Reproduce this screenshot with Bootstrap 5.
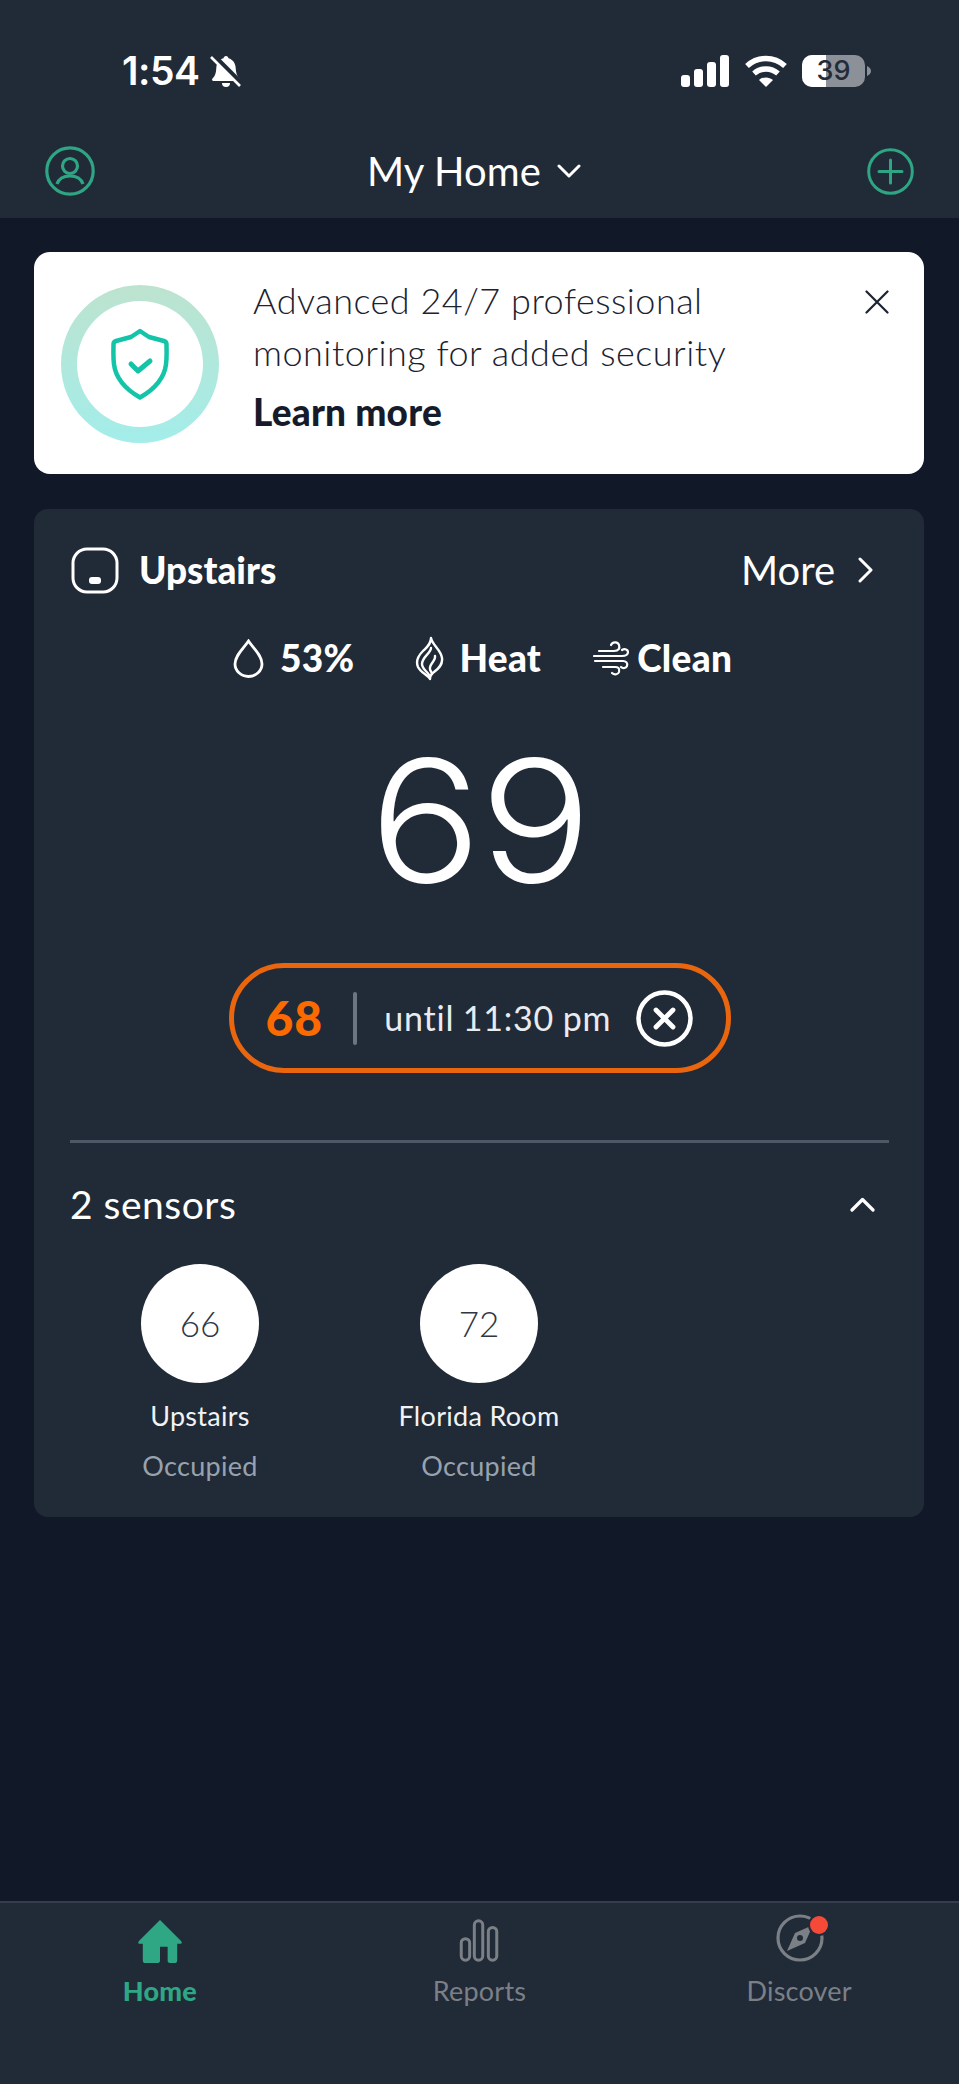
<!DOCTYPE html>
<html lang="en">
<head>
<meta charset="utf-8">
<title>My Home</title>
<link href="https://cdn.jsdelivr.net/npm/bootstrap@5.3.0/dist/css/bootstrap.min.css" rel="stylesheet">
<style>
html,body{height:2084px;}
body{margin:0;background:#111928;color:#fff;font-family:"Lato",sans-serif;overflow:hidden;}
.shell{height:2084px;}
.app-head{height:218px;background:#212a37;}
.status-row{height:44px;padding:0 88px 0 122px;}
.head-spacer{height:49px;}
.clock{font-family:"Inter",sans-serif;font-weight:600;font-size:39px;line-height:44px;letter-spacing:-.5px;}
.bell{margin-left:2px;}
.gap-sm{margin-left:14px;}
.nav-row{height:50px;margin-top:53px;padding:0 45px;}
.home-group{margin-right:14px;}
.home-title{font-size:40px;line-height:50px;font-weight:400;letter-spacing:.1px;}
.content{padding:34px 35px 0 34px;}
.promo{height:222px;border:0;border-radius:16px;background:#fff;color:#1b2230;padding:22px 35px 0 27px;}
.ring{width:158px;height:158px;margin-top:11px;border-radius:50%;background:linear-gradient(180deg,#bde3cf,#a3edea);flex:none;}
.ring-hole{width:126px;height:126px;border-radius:50%;background:#fff;}
.promo-text{margin-left:34px;font-size:36px;line-height:52px;font-weight:300;letter-spacing:.5px;}
.promo-link{font-size:37px;font-weight:900;line-height:52px;margin-top:8px;letter-spacing:.2px;color:#151b2a;}
.promo-close{margin-top:16px;}
.unit{margin-top:35px;height:1008px;border:0;border-radius:14px;background:#212a37;color:#fff;padding:38px 35px 0 36px;}
.unit-head{height:46px;}
.thermo{margin-left:1px;}
.unit-name{font-size:37px;font-weight:900;line-height:46px;margin-left:20px;}
.unit-more{font-size:40px;font-weight:400;line-height:46px;margin-right:23px;}
.more-chev{margin-right:16px;}
.modes{height:46px;margin-top:42px;padding-left:163px;}
.mode{font-size:37px;font-weight:900;line-height:46px;letter-spacing:.3px;}
.mode-a{margin-left:16px;}
.mode-b{margin-left:60px;}
.mode-c{margin-left:52px;}
.mode-t2{margin-left:15px;}
.mode-t3{margin-left:8px;}
.temp{font-family:"Inter",sans-serif;font-weight:300;font-size:170px;line-height:133px;height:133px;margin-top:73px;letter-spacing:-2px;text-align:center;transform:scaleX(1.1);}
.hold{width:502px;height:110px;margin:76px auto 0;border:5px solid #e9660f;border-radius:55px;padding-left:32px;}
.hold-set{color:#fb6a00;font-size:48px;font-weight:900;line-height:1;letter-spacing:1px;}
.hold-bar{width:4px;height:53px;background:#6c7683;border-radius:2px;margin:0 27px 0 30px;}
.hold-until{font-size:34px;font-weight:400;line-height:1;letter-spacing:.8px;word-spacing:-1px;color:#e9ecef;width:252px;}
.rule{height:3px;background:#4d5866;margin-top:67px;}
.sensors-head{height:46px;margin-top:38px;padding-right:14px;}
.sensors-title{font-size:39px;line-height:46px;font-weight:400;letter-spacing:.5px;}
.sensor-list{margin:37px 0 0 30px;gap:79px;}
.sensor{width:200px;text-align:center;}
.dial{width:118px;height:119px;border-radius:50%;background:#fff;color:#2f3743;font-size:35px;font-weight:300;margin:0 auto 13px;}
.sensor-name{font-size:27px;line-height:40px;font-weight:400;color:#f1f3f5;letter-spacing:.3px;}
.sensor-state{font-size:27px;line-height:40px;margin-top:10px;font-weight:400;color:#98a2ae;letter-spacing:.3px;}
.tabs{height:183px;background:#212a37;border-top:2px solid #343e4d;flex:none;}
.tab{padding-top:16px;text-align:center;}
.tab-icon{height:48px;}
.compass{margin:-6px 0 0 14px;}
.tab-label{font-size:27px;line-height:34px;margin-top:7px;color:#7b8087;font-weight:400;letter-spacing:.2px;}
.tab-on{color:#2fa684;font-weight:900;}
</style>
</head>
<body>
<div class="shell d-flex flex-column">
  <header class="app-head">
    <div class="head-spacer"></div>
    <div class="status-row d-flex justify-content-between align-items-center">
      <div class="d-flex align-items-center gap-2">
        <span class="clock">1:54</span>
        <svg class="bell" width="34" height="34" viewBox="0 0 34 34" aria-hidden="true">
          <path d="M17 2c-1.400 0-2.400 1-2.500 2.300C10 5.600 7.500 9.300 7.300 14c-.2 4.700-1 7.800-3.800 10.500-.9 1-.3 2.500 1 2.500h25c1.300 0 1.900-1.500 1-2.500-2.800-2.700-3.600-5.800-3.800-10.500-.2-4.700-2.700-8.400-7.200-9.700C19.400 3 18.400 2 17 2z" fill="#fff"/>
          <path d="M13 29h8a4 4 0 0 1-8 0z" fill="#fff"/>
          <path d="M5 2l28 28" stroke="#212a37" stroke-width="5"/>
          <path d="M2 3l29 29" stroke="#fff" stroke-width="2.600"/>
        </svg>
      </div>
      <div class="d-flex align-items-center">
        <svg width="49" height="32" viewBox="0 0 49 32" aria-hidden="true" fill="#fff">
          <rect x="0" y="20" width="9" height="12" rx="3"/><rect x="13" y="14" width="9" height="18" rx="3"/><rect x="26" y="7" width="9" height="25" rx="3"/><rect x="39" y="0" width="9" height="32" rx="3"/>
        </svg>
        <svg class="gap-sm" width="44" height="32" viewBox="0 0 44 32" aria-hidden="true" fill="none" stroke="#fff" stroke-width="5.500">
          <path d="M3 11c11-10 27-10 38 0"/><path d="M10 18.500c7-6 17-6 24 0"/>
          <path d="M22 32l-7-7c4-3.500 10-3.500 14 0z" fill="#fff" stroke="none"/>
        </svg>
        <svg class="gap-sm" width="69" height="32" viewBox="0 0 69 32" aria-hidden="true">
          <rect x="0" y="0" width="63" height="32" rx="10" fill="#8c9098"/>
          <path d="M10 0h14v32H10A10 10 0 0 1 0 22V10A10 10 0 0 1 10 0z" fill="#fff"/>
          <path d="M65 11c2.500 1 4 3 4 5s-1.500 4-4 5z" fill="#8c9098"/>
          <text x="31.500" y="25" text-anchor="middle" font-family="Inter, sans-serif" font-size="27" font-weight="500" fill="#232b38">39</text>
        </svg>
      </div>
    </div>
    <nav class="nav-row d-flex justify-content-between align-items-center">
      <svg width="50" height="50" viewBox="0 0 50 50" fill="none" stroke="#2ea684" stroke-width="3.200" aria-label="Profile">
        <circle cx="25" cy="25" r="23.200"/><circle cx="25" cy="20" r="7.500"/><path d="M12 38c2-6 7-8 13-8s11 2 13 8"/>
      </svg>
      <div class="home-group d-flex align-items-center">
        <span class="home-title">My Home</span>
        <svg class="ms-3" width="24" height="14" viewBox="0 0 24 14" fill="none" stroke="#fff" stroke-width="3" stroke-linecap="round" stroke-linejoin="round" aria-hidden="true"><path d="M2 2l10 10L22 2"/></svg>
      </div>
      <svg width="47" height="47" viewBox="0 0 47 47" fill="none" stroke="#2ea684" stroke-width="3" stroke-linecap="round" aria-label="Add">
        <circle cx="23.500" cy="23.500" r="21.800"/><path d="M23.500 12v23M12 23.500h23"/>
      </svg>
    </nav>
  </header>

  <main class="content flex-grow-1">
    <section class="card promo flex-row align-items-start">
      <div class="ring d-flex align-items-center justify-content-center">
        <div class="ring-hole d-flex align-items-center justify-content-center">
          <svg width="58" height="72" viewBox="0 0 58 72" fill="none" stroke="#14c4a8" stroke-width="4.500" stroke-linecap="round" stroke-linejoin="round" aria-hidden="true">
            <path d="M29 3l9 6 15 4c2 .500 2.500 1.500 2.500 3.500 0 6 .5 12-.5 20-2 15-12 25-26 33C15 61.500 5 51.500 3 36.500 2 28.500 2.500 22.500 2.500 16.500c0-2 .5-3 2.500-3.500l15-4z"/>
            <path d="M20 36l7 7 12-10" stroke-width="5"/>
          </svg>
        </div>
      </div>
      <div class="promo-text flex-grow-1">
        <div>Advanced 24/7 professional</div>
        <div>monitoring for added security</div>
        <div class="promo-link">Learn more</div>
      </div>
      <svg class="promo-close" width="24" height="24" viewBox="0 0 24 24" fill="none" stroke="#1b2230" stroke-width="2.200" stroke-linecap="round" aria-label="Close"><path d="M1.500 1.500l21 21M22.500 1.500l-21 21"/></svg>
    </section>

    <section class="card unit">
      <div class="unit-head d-flex justify-content-between align-items-center">
        <div class="d-flex align-items-center">
          <svg class="thermo" width="48" height="47" viewBox="0 0 48 47" fill="none" stroke="#fff" stroke-width="3" aria-hidden="true">
            <rect x="2" y="2" width="44" height="43" rx="14"/><rect x="18" y="30" width="12" height="7" rx="3" fill="#fff" stroke="none"/>
          </svg>
          <span class="unit-name">Upstairs</span>
        </div>
        <div class="d-flex align-items-center">
          <span class="unit-more">More</span>
          <svg class="more-chev" width="15" height="26" viewBox="0 0 15 26" fill="none" stroke="#fff" stroke-width="3" stroke-linecap="round" stroke-linejoin="round" aria-hidden="true"><path d="M2 2l11 11L2 24"/></svg>
        </div>
      </div>

      <div class="modes d-flex align-items-center mode">
        <svg width="31" height="39" viewBox="0 0 31 39" fill="none" stroke="#fff" stroke-width="2.800" aria-hidden="true"><path d="M15.500 2C11 9 2 16 2 25a13.500 12.500 0 0 0 27 0C29 16 20 9 15.500 2z"/></svg>
        <span class="mode-a">53%</span>
        <svg class="mode-b" width="30" height="45" viewBox="0 0 30 45" fill="none" stroke="#fff" stroke-width="2.400" stroke-linejoin="round" stroke-linecap="round" aria-hidden="true">
          <path d="M17 2c2 8 10 12 11 20 1 7-4 11-8 14-3 2-4 4-4 7-2-4-9-6-12-12-3-7 1-12 5-16 4-4 8-7 8-13z"/>
          <path d="M17 12c0 5-9 9-9 16 0 5 5 7 7 11"/>
          <path d="M21 20c1 5-6 8-5 13 0 2 2 3 2 5"/>
        </svg>
        <span class="mode-t2">Heat</span>
        <svg class="mode-c" width="36" height="36" viewBox="0 0 36 36" fill="none" stroke="#fff" stroke-width="2.200" stroke-linecap="round" aria-hidden="true">
          <path d="M6 11h15c5 0 6-3 5-6-1-3-6-4-8 0"/><path d="M1 16h28c4 0 6-2 6-4s-3-4-6-2"/><path d="M2 21h28c3 0 5 2 4 5-1 2-4 3-6 1"/><path d="M10 27h12c3 0 5 1 4 5-1 3-5 3-7 1"/>
        </svg>
        <span class="mode-t3">Clean</span>
      </div>

      <div class="temp">69</div>

      <div class="hold d-flex align-items-center">
        <span class="hold-set">68</span>
        <span class="hold-bar"></span>
        <span class="hold-until">until 11:30 pm</span>
        <svg width="57" height="57" viewBox="0 0 57 57" fill="none" stroke="#fff" stroke-width="4.500" stroke-linecap="round" aria-label="Cancel hold"><circle cx="28.500" cy="28.500" r="26"/><path d="M20 20l17 17M37 20L20 37" stroke-width="4.800"/></svg>
      </div>

      <div class="rule"></div>

      <div class="sensors-head d-flex justify-content-between align-items-center">
        <span class="sensors-title">2 sensors</span>
        <svg width="25" height="15" viewBox="0 0 25 15" fill="none" stroke="#fff" stroke-width="3.200" stroke-linecap="round" stroke-linejoin="round" aria-hidden="true"><path d="M2 13L12.500 2.500 23 13"/></svg>
      </div>

      <div class="sensor-list d-flex">
        <div class="sensor">
          <div class="dial d-flex align-items-center justify-content-center">66</div>
          <div class="sensor-name">Upstairs</div>
          <div class="sensor-state">Occupied</div>
        </div>
        <div class="sensor">
          <div class="dial d-flex align-items-center justify-content-center">72</div>
          <div class="sensor-name">Florida Room</div>
          <div class="sensor-state">Occupied</div>
        </div>
      </div>
    </section>
  </main>

  <footer class="tabs row g-0">
    <div class="col-4 tab">
      <div class="tab-icon d-flex justify-content-center">
        <svg width="48" height="44" viewBox="0 0 48 46" aria-hidden="true">
          <path d="M24 1l22 22c1.500 2 .5 3-1 3h-3v17c0 2-1 3-3 3h-5c-1 0-2-1-2-2V29h-8v15c0 1-1 2-2 2H9c-2 0-3-1-3-3V26H3c-1.500 0-2.500-1-1-3z" fill="#2fa684"/>
        </svg>
      </div>
      <div class="tab-label tab-on">Home</div>
    </div>
    <div class="col-4 tab">
      <div class="tab-icon d-flex justify-content-center">
        <svg width="42" height="43" viewBox="0 0 42 46" fill="none" stroke="#7b8087" stroke-width="3.200" aria-hidden="true">
          <rect x="2" y="21" width="9" height="23" rx="4.500"/><rect x="16" y="2" width="9" height="42" rx="4.500"/><rect x="31" y="9" width="9" height="35" rx="4.500"/>
        </svg>
      </div>
      <div class="tab-label">Reports</div>
    </div>
    <div class="col-4 tab">
      <div class="tab-icon d-flex justify-content-center">
        <svg class="compass" width="60" height="50" viewBox="0 0 60 50" aria-hidden="true">
          <circle cx="24" cy="25" r="22" fill="none" stroke="#7b8087" stroke-width="3.200"/>
          <path d="M37 12L29 30 11 38l8-18z" fill="#7b8087"/>
          <circle cx="24" cy="25" r="3" fill="#212a37"/>
          <circle cx="43" cy="12" r="11" fill="#212a37"/>
          <circle cx="43" cy="12" r="9" fill="#f54a37"/>
        </svg>
      </div>
      <div class="tab-label">Discover</div>
    </div>
  </footer>
</div>
<script src="https://cdn.jsdelivr.net/npm/bootstrap@5.3.0/dist/js/bootstrap.bundle.min.js"></script>
</body>
</html>
